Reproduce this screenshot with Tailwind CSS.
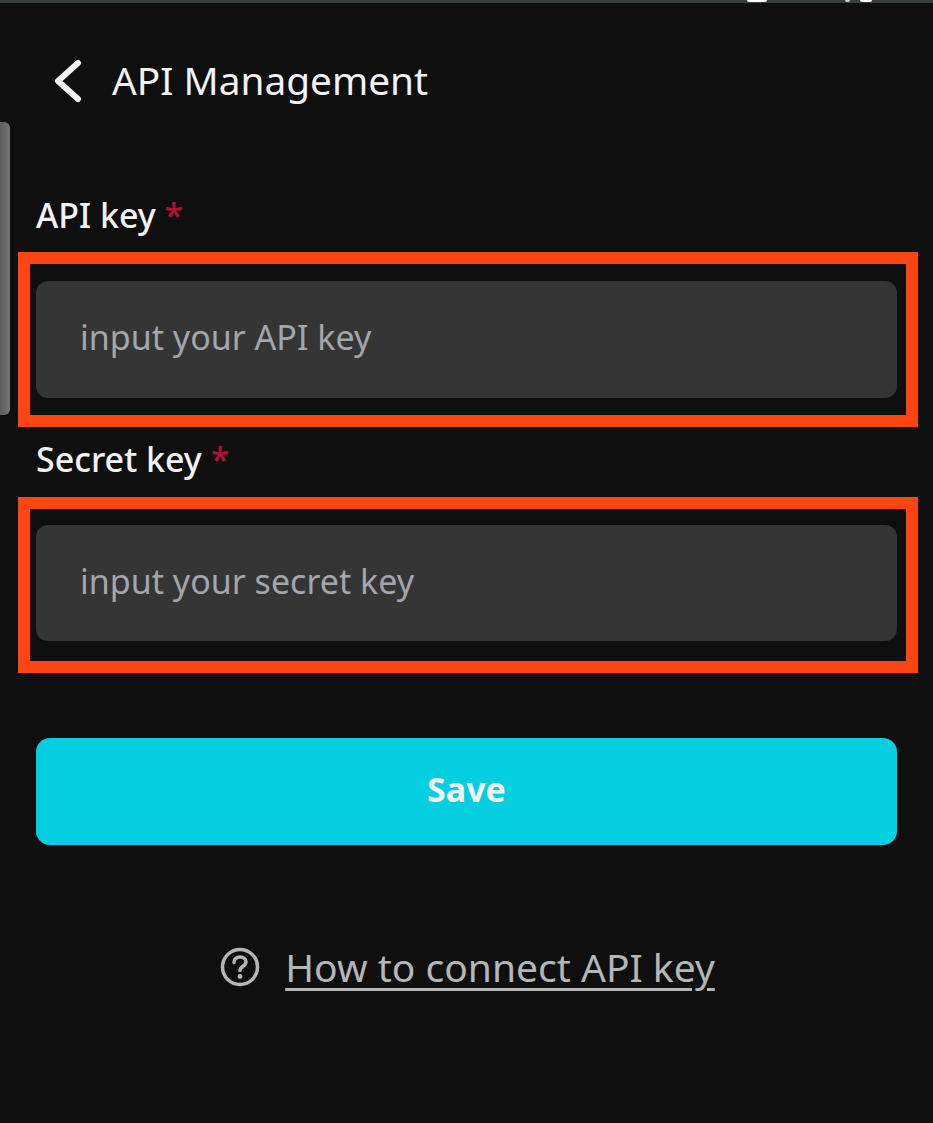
<!DOCTYPE html>
<html lang="en">
<head>
  <meta charset="UTF-8">
  <title>API Management</title>
  <script src="https://cdn.jsdelivr.net/npm/@tailwindcss/browser@4"></script>
</head>
<body class="bg-[#0f0f10] font-['Noto_Sans',sans-serif]">
  <div class="relative w-[933px] h-[1123px] overflow-hidden">
    <!-- status bar edge -->
    <div class="relative h-[3px] bg-[#3a3d3d]">
      <div class="absolute left-[747px] top-0 w-[20px] h-[2px] rounded-b-full bg-white"></div>
      <div class="absolute left-[845px] top-0 w-[5px] h-[2px] rounded-b-full bg-[#cccccc]"></div>
      <div class="absolute left-[860px] top-0 w-[12px] h-[2px] rounded-b-full bg-white"></div>
    </div>

    <!-- side handle -->
    <div class="absolute left-0 top-[122px] w-[10px] h-[293px] rounded-r-[6px] bg-gradient-to-r from-[#5c5c5c] to-[#757575]"></div>

    <!-- header -->
    <div class="flex items-center h-[50px] mt-[53px] pl-[54px] text-[#f2f2f2]">
      <svg class="w-[28px] h-[44px]" viewBox="0 0 28 44" fill="none" stroke="currentColor" stroke-width="6" stroke-linecap="round" stroke-linejoin="round">
        <path d="M24 4 L4 22 L24 40" />
      </svg>
      <h1 class="ml-[30px] pb-[2px] text-[38.8px] leading-[48px]">API Management</h1>
    </div>

    <!-- form -->
    <div class="px-[36px] mt-[86px]">
      <div class="text-[34px] leading-[46px] font-medium text-[#f2f2f2]">API key <span class="text-[#b01238]">*</span></div>
      <div class="-ml-[18px] -mr-[21px] mt-[14px] border-[12px] border-[#ff4514] pl-[6px] pr-[9px] py-[17px]">
        <div class="flex items-center h-[117px] pl-[44px] pb-[4px] rounded-[12px] bg-[#353535] text-[34px] text-[#a3a6ab]">input your API key</div>
      </div>

      <div class="mt-[9px] text-[34px] leading-[46px] font-medium text-[#f2f2f2]">Secret key <span class="text-[#b01238]">*</span></div>
      <div class="-ml-[18px] -mr-[21px] mt-[15px] border-[12px] border-[#ff4514] pl-[6px] pr-[9px] pt-[16px] pb-[20px]">
        <div class="flex items-center h-[116px] pl-[44px] pb-[4px] rounded-[12px] bg-[#353535] text-[34px] text-[#a3a6ab]">input your secret key</div>
      </div>

      <button class="block w-full h-[107px] mt-[65px] pb-[4px] rounded-[14px] bg-[#03cfe1] text-[34px] font-bold text-[#f2f2f2]">Save</button>

      <div class="flex items-center justify-center mt-[99px] pl-[2px] text-[#b4b6b8]">
        <svg class="w-[40px] h-[40px]" viewBox="0 0 40 40" fill="none" stroke="currentColor" stroke-width="3.5" stroke-linecap="round">
          <circle cx="20" cy="20" r="17.5" />
          <path d="M14 15.5 C14 11.5 17 10 20 10 C23.5 10 26 12 26 15 C26 19 20 19.5 20 23.5" />
          <circle cx="20" cy="29.5" r="2.4" fill="currentColor" stroke="none" />
        </svg>
        <a class="ml-[25px] text-[39px] leading-[46px] underline underline-offset-[6px] decoration-[3px]">How to connect API key</a>
      </div>
    </div>
  </div>
</body>
</html>
